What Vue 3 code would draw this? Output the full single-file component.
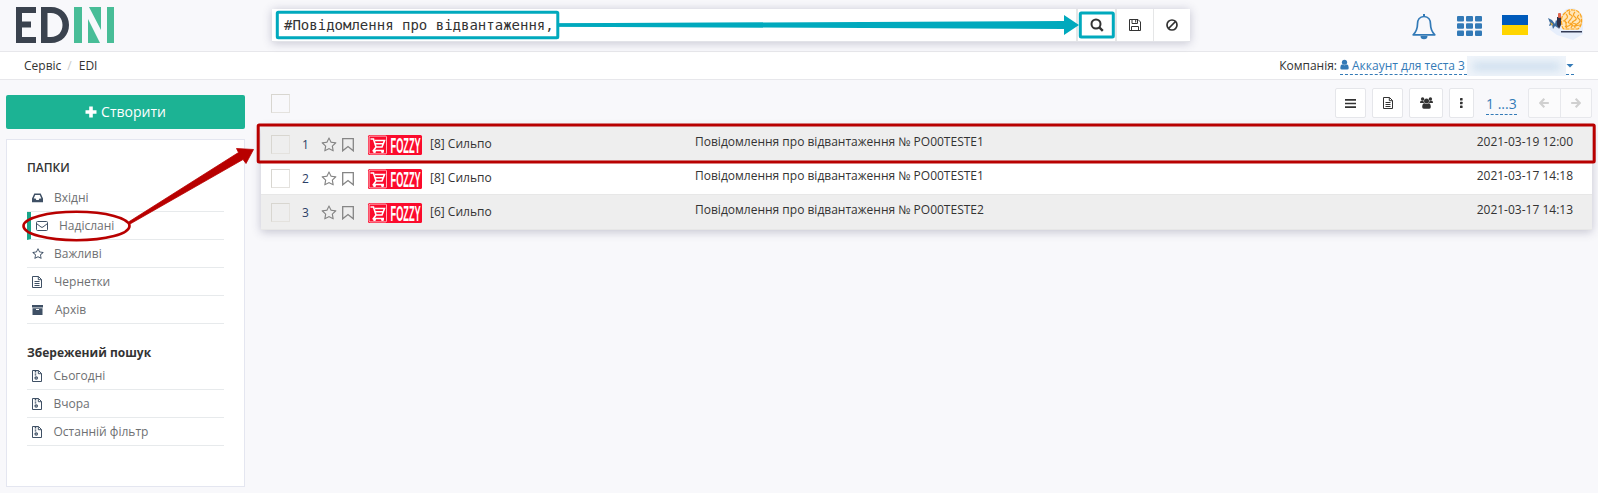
<script setup>
const folders = [
  { icon: 'inbox', name: 'Вхідні' },
  { icon: 'mail', name: 'Надіслані', active: true },
  { icon: 'star', name: 'Важливі' },
  { icon: 'file', name: 'Чернетки' },
  { icon: 'archive', name: 'Архів' }
]
const saved = ['Сьогодні', 'Вчора', 'Останній фільтр']
const rows = [
  { n: 1, from: '[8] Сильпо', subject: 'Повідомлення про відвантаження № PO00TESTE1', date: '2021-03-19 12:00' },
  { n: 2, from: '[8] Сильпо', subject: 'Повідомлення про відвантаження № PO00TESTE1', date: '2021-03-17 14:18' },
  { n: 3, from: '[6] Сильпо', subject: 'Повідомлення про відвантаження № PO00TESTE2', date: '2021-03-17 14:13' }
]
const starPath = 'M1201 1004l306-297-422-62-189-382-189 382-422 62 306 297-73 421 378-199 377 199zm527-357q0 22-26 48l-363 354 86 500q1 7 1 20 0 50-41 50-19 0-40-12l-449-236-449 236q-22 12-40 12-21 0-31.5-14.5t-10.5-35.5q0-6 2-20l86-500-364-354q-25-27-25-48 0-37 56-46l502-73 225-455q19-41 49-41t49 41l225 455 502 73q56 9 56 46z'
</script>

<template>
  <div class="page">
    <header class="top">
      <svg class="logo" width="98" height="36" viewBox="0 0 98 36">
        <path fill="#3a424e" d="M0 0H20V6H6V14.500H15V20.500H6V30H20V36H0Z" />
        <path fill="#3a424e" fill-rule="evenodd" d="M25 0H35C46 0 53 8 53 18S46 36 35 36H25ZM31.500 6V30H35C42 30 46.500 25 46.500 18S42 6 35 6Z" />
        <path fill="#48bd97" d="M58 0H66V36H58ZM73 0H85V23ZM72 12L84 36H72ZM91 0H98V36H91Z" />
      </svg>
      <div class="search">
        <div class="query">#Повідомлення про відвантаження,</div>
        <div class="sbtn wide">
          <svg width="14" height="14" viewBox="0 0 14 14" fill="none" stroke="#333" stroke-width="2"><circle cx="6" cy="6" r="4.500" /><path d="M9.300 9.300L12.800 12.800" stroke-width="2.400" /></svg>
        </div>
        <div class="sbtn mid">
          <svg width="12" height="12" viewBox="0 0 12 12" fill="none" stroke="#333"><path d="M.5.5H9L11.500 3V11.500H.5ZM3 .5V4.500H8.500V.5M2.500 11.500V7.500H9.500V11.500M6.700 1V3.500" /></svg>
        </div>
        <div class="sbtn">
          <svg width="12" height="12" viewBox="0 0 12 12" fill="none" stroke="#333" stroke-width="1.700"><circle cx="6" cy="6" r="5" /><path d="M2.500 9.500L9.500 2.500" /></svg>
        </div>
      </div>
      <div class="tools">
        <svg class="bell" width="24" height="26" viewBox="0 0 24 26">
          <path d="M12 2.500C7.500 2.500 5.500 6 5.500 10C5.500 15 4 18 1.200 20.800H22.800C20 18 18.500 15 18.500 10C18.500 6 16.500 2.500 12 2.500Z" fill="none" stroke="#337ab7" stroke-width="1.700" stroke-linejoin="round" />
          <path d="M11 0H13V3H11ZM8.500 22H15.500A3.500 3.300 0 0 1 8.500 22Z" fill="#337ab7" />
        </svg>
        <svg class="apps" width="25" height="20" viewBox="0 0 25 20" fill="#337ab7">
          <template v-for="y in 3" :key="y">
            <rect v-for="x in 3" :key="x" :x="(x - 1) * 9" :y="(y - 1) * 7.200" width="7" height="5.600" rx="1" />
          </template>
        </svg>
        <div class="flag"></div>
        <svg class="avatar" width="36" height="32" viewBox="0 0 36 32">
          <path d="M1 21L10 10L18 1L26 0L35 8V26L25 32L9 27Z" fill="#e6eefb" />
          <path d="M13 15Q12 8 16 5Q19 1 24 1Q30 1 32 5Q36 9 34 16Q33 22 27 22H15Q13 19 13 15Z" fill="#ffe6b8" />
          <g fill="none" stroke="#f9a21f" stroke-width="1.200">
            <path d="M14 17Q12 9 17 5Q20 1 25 2Q31 2 33 8Q35 17 30 21H16Q14 20 14 17Z" stroke-dasharray="4 1" />
            <path d="M18 6Q21 9 18 11T19 15M22 3Q20 6 23 7T22 12T24 15M27 4Q24 7 27 9T26 13T28 16M31 7Q28 9 31 11T29 16T32 17M15 13Q18 12 18 16T22 17T23 20M24 18Q27 17 27 20M17 18L19 20" />
          </g>
          <path d="M0 10L4 12L7 16L8 12L10 14L10 20L7 18L5 21L4 17L1 18L2 15Z" fill="#3d6c9d" />
          <path d="M2 14L5 16L4 18Z" fill="#e7b23c" />
          <path d="M9 9L13 9V17L11 21L9 17Z" fill="#2e3149" /><rect x="10" y="5" width="3" height="5" rx="1" fill="#e0654c" />
          <path d="M13 23H34V24.500H13Z" fill="#333a55" />
        </svg>
      </div>
    </header>

    <nav class="crumbs">
      <span>Сервіс</span><span class="slash">/</span><span>EDI</span>
      <div class="company">
        <span class="label">Компанія:</span>
        <span class="link"><svg width="9" height="11" viewBox="0 0 10 11" fill="#337ab7"><circle cx="5" cy="3" r="2.900" /><path d="M2.300 5.200Q5 7.200 7.700 5.200Q9.700 6 9.700 9.300Q9.700 11 8 11H2Q.3 11 .3 9.300Q.3 6 2.300 5.200Z" /></svg><span class="account">Аккаунт для теста 3</span></span>
        <span class="hidden"><i></i></span>
        <span class="caret"><i></i></span>
      </div>
    </nav>

    <div class="body">
      <aside>
        <button class="create"><svg width="12" height="12" viewBox="0 0 12 12"><path d="M4.200 .5H7.800V4.200H11.500V7.800H7.800V11.500H4.200V7.800H.5V4.200H4.200Z" fill="#fff" /></svg><span>Створити</span></button>
        <div class="panel">
          <h5 class="caps">ПАПКИ</h5>
          <ul>
            <li v-for="f in folders" :key="f.name" :class="['to-' + f.icon, { active: f.active }]">
              <span class="ico">
                <svg v-if="f.icon === 'inbox'" width="11" height="10" viewBox="0 0 11 10"><path fill="#3f5065" fill-rule="evenodd" d="M2.300 .5H8.700L11 5.500V9.300H0V5.500ZM3.200 2L1.700 5.600H3.600L4.300 7H6.700L7.400 5.600H9.300L7.800 2Z" /></svg>
                <svg v-else-if="f.icon === 'mail'" width="12" height="10" viewBox="0 0 12 10" fill="none" stroke="#3f5065"><rect x=".5" y=".5" width="11" height="9" rx="1" /><path d="M.5 2.500L5 6Q6 6.700 7 6L11.500 2.500" /></svg>
                <svg v-else-if="f.icon === 'star'" width="12" height="12" viewBox="0 0 1792 1792" fill="#3f5065"><path :d="starPath" /></svg>
                <svg v-else-if="f.icon === 'file'" width="10" height="12" viewBox="0 0 10 12" fill="none" stroke="#3f5065"><path d="M.5.5H6.500L9.500 3.500V11.500H.5ZM6.300.5V3.700H9.500M2.500 5.500H7.500M2.500 7.500H7.500M2.500 9.500H7.500" /></svg>
                <svg v-else width="11" height="10" viewBox="0 0 11 10"><path fill="#3f5065" fill-rule="evenodd" d="M0 0H11V2.600H0ZM.5 3.200H10.500V10H.5ZM4 4V5H7V4Z" /></svg>
              </span>
              {{ f.name }}
            </li>
          </ul>
          <h5>Збережений пошук</h5>
          <ul>
            <li v-for="s in saved" :key="s" class="saved">
              <span class="ico"><svg width="10" height="12" viewBox="0 0 10 12" fill="none" stroke="#3f5065"><path d="M.5.500H6.500L9.500 3.500V11.500H.5ZM6.300.5V3.700H9.500" /><path d="M3.500 1V6" stroke-dasharray="1 .6" stroke-width="1.500" /><circle cx="4.200" cy="8" r="1.200" stroke-width="1.200" /></svg></span>
              {{ s }}
            </li>
          </ul>
        </div>
      </aside>

      <main>
        <div class="bar">
          <span class="check"></span>
          <div class="btn b1"><svg width="11" height="9" viewBox="0 0 11 9"><path d="M0 .9H11M0 4.500H11M0 8.100H11" stroke="#333" stroke-width="1.600" /></svg></div>
          <div class="btn b2"><svg width="10" height="12" viewBox="0 0 10 12" fill="none" stroke="#333"><path d="M.5.5H6.500L9.500 3.500V11.500H.5ZM6.300.5V3.700H9.500M2.500 5.500H7.500M2.500 7.500H7.500M2.500 9.500H7.500" /></svg></div>
          <div class="btn b3"><svg width="13" height="12" viewBox="0 0 13 12" fill="#333"><circle cx="2.600" cy="2" r="1.700" /><circle cx="10.400" cy="2" r="1.700" /><circle cx="6.500" cy="4" r="2.500" /><path d="M.9 3.800H3.500Q3.400 5.300 4.300 6H0Q0 4.300 .9 3.800ZM12.100 3.800H9.500Q9.600 5.300 8.700 6H13Q13 4.300 12.100 3.800ZM4.400 6.200Q6.500 7.600 8.600 6.200Q10.800 6.500 10.800 10Q10.800 11.800 9.300 11.800H3.700Q2.200 11.800 2.200 10Q2.200 6.500 4.400 6.200Z" /></svg></div>
          <div class="btn b4"><svg width="3" height="10" viewBox="0 0 3 10" fill="#333"><rect width="2.600" height="2.600" rx=".6" /><rect y="3.700" width="2.600" height="2.600" rx=".6" /><rect y="7.400" width="2.600" height="2.600" rx=".6" /></svg></div>
          <span class="range">1 ...3</span>
          <div class="pager">
            <span><svg width="10" height="10" viewBox="0 0 10 10" fill="none" stroke="#d0d0d0" stroke-width="2.200"><path d="M9.800 5H1.500M5.300 .8L1.200 5L5.300 9.200" /></svg></span>
            <span><svg width="10" height="10" viewBox="0 0 10 10" fill="none" stroke="#d0d0d0" stroke-width="2.200"><path d="M.2 5H8.500M4.700 .8L8.800 5L4.700 9.200" /></svg></span>
          </div>
        </div>
        <div class="table">
          <div v-for="r in rows" :key="r.n" class="row">
            <span class="check"></span>
            <span class="num">{{ r.n }}</span>
            <svg class="star" width="16" height="16" viewBox="0 0 1792 1792" fill="#858585"><path :d="starPath" /></svg>
            <svg class="mark" width="12" height="14" viewBox="0 0 12 14" fill="none" stroke="#858585" stroke-width="1.300"><path d="M.7.700H11.300V12.800L6 8.500L.7 12.800Z" /></svg>
            <svg class="brand" width="54" height="20" viewBox="0 0 54 20">
              <rect width="54" height="20" rx="1.500" fill="#fb0b2c" />
              <rect x="1.100" y="1.100" width="17.400" height="17.800" rx="1" fill="none" stroke="#fff" stroke-width=".7" />
              <g fill="none" stroke="#fff" stroke-width="1.600"><path d="M2.500 4H5.500L8 12H14L16.500 5.500H7M7.500 8.700H15M8 12L5.500 15.500H16" /></g>
              <circle cx="6.500" cy="16.500" r="1.500" fill="#fff" /><circle cx="14.500" cy="16.500" r="1.500" fill="#fff" />
              <text transform="translate(22.500 17.800) scale(.42 1)" fill="#fff" font-family="Liberation Sans" font-weight="700" font-size="22">FOZZY</text>
            </svg>
            <span class="from">{{ r.from }}</span>
            <span class="subject">{{ r.subject }}</span>
            <span class="date">{{ r.date }}</span>
          </div>
        </div>
      </main>
    </div>

    <svg class="marks" width="1598" height="493" viewBox="0 0 1598 493" fill="none">
      <g stroke="#00a9bd" stroke-width="3">
        <rect x="277.300" y="12.300" width="280.500" height="25.500" rx="1" />
        <rect x="1080.300" y="13" width="33" height="24" rx="1" />
        <path d="M559 25H1065" />
      </g>
      <path d="M559 23.300L1064 21V15L1079 25L1064 35V29L559 26.700Z" fill="#00a9bd" />
      <g stroke="#b80000">
        <rect x="258.200" y="125" width="1336" height="37" rx="1" stroke-width="3" />
        <ellipse cx="76.500" cy="226" rx="53" ry="14.200" stroke-width="2.600" />
      </g>
      <path d="M128.500 222L238.500 152.500L236.500 148.500L253.500 149.500L246 163.500L243 159.500L130 224Z" fill="#b80000" stroke="#b80000" stroke-width=".8" stroke-linejoin="round" />
    </svg>
  </div>
</template>

<style>
html, body { margin: 0; overflow: hidden; background: #f8f8fb; }
</style>
<style scoped>
* { box-sizing: border-box; }
.page { position: relative; width: 1598px; height: 493px; overflow: hidden; background: #f8f8fb; color: #333; font: 12px/18px "Open Sans", "Noto Sans", sans-serif; }
svg { display: block; flex: none; }
.top { display: flex; height: 52px; border-bottom: 1px solid #e7e7eb; }
.logo { margin: 7px 0 0 16px; }
.search { display: flex; margin: 9px 0 0 158px; width: 918px; height: 33px; background: #fff; border-bottom: 1px solid #e2e3e8; box-shadow: 0 1px 9px rgba(60, 60, 100, .28); }
.query { flex: 1; padding: 0 0 0 12px; font: 14px/32px "DejaVu Sans Mono", monospace; white-space: pre; }
.sbtn { display: flex; align-items: center; justify-content: center; width: 37px; border-left: 1px solid #e5e6e7; }
.sbtn.wide { width: 39px; border-left-width: 2px; }
.sbtn.mid { width: 38px; border-left-width: 2px; }
.tools { display: flex; margin-left: 222px; }
.bell { margin-top: 14px; }
.apps { margin: 16px 0 0 21px; }
.flag { width: 26px; height: 20px; margin: 15px 0 0 20px; background: linear-gradient(#005bbb 50%, #ffd500 50%); }
.avatar { margin: 8px 0 0 20px; }
.crumbs { display: flex; align-items: center; height: 28px; padding-left: 24px; background: #fff; border-bottom: 1px solid #e7e7eb; }
.slash { margin: 0 7px 0 6px; color: #ccc; }
.company { display: flex; margin: 0 24px 0 auto; height: 20px; line-height: 18px; }
.label { margin-right: 3px; padding-top: 1px; }
.link { display: flex; align-items: center; width: 127px; height: 19px; border-bottom: 1px dashed #337ab7; color: #337ab7; }
.account { margin-left: 3px; padding-top: 2px; white-space: nowrap; }
.hidden { width: 99px; height: 20px; background: #eff4fa; overflow: hidden; }
.hidden i { display: block; width: 87px; height: 7px; margin: 7px 6px; background: #c8dbec; filter: blur(4px); }
.caret { display: flex; width: 8px; height: 19px; border-bottom: 1px dashed #337ab7; }
.caret i { width: 8px; height: 4px; margin: 8px 0 0; background: #337ab7; clip-path: polygon(0 0, 100% 0, 50% 100%); }
.body { display: flex; padding-left: 6px; }
aside { width: 239px; padding-top: 15px; }
.create { display: flex; align-items: center; justify-content: center; gap: 4px; width: 239px; height: 34px; padding: 0 0 1px; border: 0; border-radius: 2px; background: #1cb394; color: #fff; font: 14px/20px "Open Sans", sans-serif; }
.panel { height: 348px; margin-top: 10px; padding: 18px 20px 0; border: 1px solid #e4e6f0; background: #fff; }
h5 { margin: 0; font: 700 12px/20px "Open Sans", sans-serif; }
h5.caps { font-weight: 600; margin-bottom: 6px; }
ul { margin: 0; padding: 0; list-style: none; }
ul + h5 { margin: 19px 0 -1px; }
li { display: flex; align-items: center; height: 28px; padding-left: 5px; border-bottom: 1px solid #e7eaec; color: #6e7072; }
li.active { border-left: 4px solid #1aa68a; }
.ico { width: 22px; }
.saved .ico { width: 21.500px; }
.to-mail .ico, .to-archive .ico { width: 23px; }
main { width: 1331px; margin-left: 16px; }
.bar { display: flex; align-items: center; height: 47px; padding: 0 0 1px 10px; }
.check { width: 19px; height: 19px; border: 1px solid #d8d6d0; border-right-color: #e4e2de; border-bottom-color: #e4e2de; }
.btn { display: flex; align-items: center; justify-content: center; height: 30px; margin-left: 6px; border: 1px solid #e5e6ea; border-radius: 2px; background: #fff; }
.b1 { width: 31px; margin-left: auto; }
.b2 { width: 31px; }
.b3 { width: 34px; }
.b4 { width: 25px; }
.range { width: 31px; margin-left: 12px; padding-top: 2px; border-bottom: 1px dashed #337ab7; color: #337ab7; font-size: 14px; line-height: 20px; white-space: nowrap; }
.pager { display: flex; width: 64px; height: 30px; margin-left: 11px; border: 1px solid #e7e8ec; border-radius: 2px; background: #fbfbfc; }
.pager span { display: flex; flex: 1; align-items: center; justify-content: center; }
.pager span + span { border-left: 1px solid #e7e8ec; }
.table { height: 103px; background: #fff; box-shadow: 0 2px 9px rgba(60, 60, 100, .28); }
.row { display: grid; grid-template-columns: 19px 31px 20px 27px 62px 265px 1fr auto; align-items: start; height: 34px; padding: 0 19px 0 10px; background: #fff; border-bottom: 1px solid #e7e7e7; }
.row:nth-child(odd) { background: #eee; }
.row:nth-child(3) { height: 35px; }
.row .check { margin-top: 8px; }
.num { margin-top: 9px; padding-left: 12px; color: #2b3f66; }
.star { margin-top: 10px; }
.mark { margin: 11px 0 0 1px; }
.brand { margin-top: 8px; overflow: visible; }
.from { margin-top: 8px; }
.subject, .date { margin-top: 6px; }
.marks { position: absolute; left: 0; top: 0; pointer-events: none; }
</style>
